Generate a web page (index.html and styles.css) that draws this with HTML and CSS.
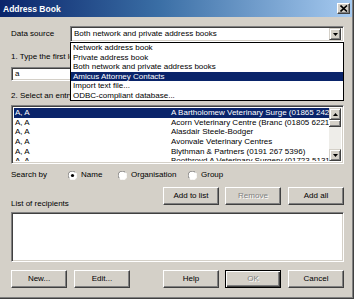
FILE: index.html
```html
<!DOCTYPE html>
<html>
<head>
<meta charset="utf-8">
<link rel="stylesheet" href="styles.css">
</head>
<body>
<div class="window">
  <div class="titlebar">
    <span class="title">Address Book</span>
    <span class="closebtn"><svg width="8" height="7" viewBox="0 0 8 7"><path d="M0.5 0.5 L7 6.5 M7 0.5 L0.5 6.5" stroke="#000" stroke-width="1.6"/></svg></span>
  </div>
  <div class="content">
    <div class="row-source">
      <span class="lbl-source">Data source</span>
      <div class="combo">
        <span class="combo-text">Both network and private address books</span>
        <span class="arrowbtn"><svg width="5" height="3" viewBox="0 0 5 3"><path d="M0 0 H5 L2.5 3 Z" fill="#000"/></svg></span>
        <ul class="dropdown">
          <li>Network address book</li>
          <li>Private address book</li>
          <li>Both network and private address books</li>
          <li class="sel">Amicus Attorney Contacts</li>
          <li>Import text file...</li>
          <li>ODBC-compliant database...</li>
        </ul>
      </div>
    </div>
    <div class="lbl lbl-type">1. Type the first letters of the name</div>
    <div class="input">a</div>
    <div class="lbl lbl-select">2. Select an entry from the list</div>
    <div class="listbox">
      <div class="rows">
        <div class="item sel"><span class="c1">A, A</span><span class="c2">A Bartholomew Veterinary Surge (01865 242222)</span></div>
        <div class="item"><span class="c1">A, A</span><span class="c2">Acorn Veterinary Centre (Branc (01805 622100)</span></div>
        <div class="item"><span class="c1">A, A</span><span class="c2">Alasdair Steele-Bodger</span></div>
        <div class="item"><span class="c1">A, A</span><span class="c2">Avonvale Veterinary Centres</span></div>
        <div class="item"><span class="c1">A, A</span><span class="c2">Blythman &amp; Partners (0191 267 5396)</span></div>
        <div class="item"><span class="c1">A, A</span><span class="c2">Boothroyd A Veterinary Surgery (01723 513111)</span></div>
      </div>
      <div class="scrollbar">
        <span class="sbtn"><svg width="5" height="3" viewBox="0 0 5 3"><path d="M2.5 0 L5 3 H0 Z" fill="#000"/></svg></span>
        <span class="thumb"></span>
        <span class="track"></span>
        <span class="sbtn"><svg width="5" height="3" viewBox="0 0 5 3"><path d="M0 0 H5 L2.5 3 Z" fill="#000"/></svg></span>
      </div>
    </div>
    <div class="row-search">
      <span class="lbl-search">Search by</span>
      <span class="radio r-name"><svg width="9" height="9" viewBox="0 0 9 9"><circle cx="4.5" cy="4.5" r="4" fill="#fff"/><path d="M1.3 7.2 A4 4 0 0 1 7.2 1.3" fill="none" stroke="#808080" stroke-width="1"/><path d="M7.7 1.8 A4 4 0 0 1 1.8 7.7" fill="none" stroke="#fff" stroke-width="1"/><circle cx="4.5" cy="4.5" r="1.6" fill="#000"/></svg>Name</span>
      <span class="radio r-org"><svg width="9" height="9" viewBox="0 0 9 9"><circle cx="4.5" cy="4.5" r="4" fill="#fff"/><path d="M1.3 7.2 A4 4 0 0 1 7.2 1.3" fill="none" stroke="#808080" stroke-width="1"/><path d="M7.7 1.8 A4 4 0 0 1 1.8 7.7" fill="none" stroke="#fff" stroke-width="1"/></svg>Organisation</span>
      <span class="radio r-group"><svg width="9" height="9" viewBox="0 0 9 9"><circle cx="4.5" cy="4.5" r="4" fill="#fff"/><path d="M1.3 7.2 A4 4 0 0 1 7.2 1.3" fill="none" stroke="#808080" stroke-width="1"/><path d="M7.7 1.8 A4 4 0 0 1 1.8 7.7" fill="none" stroke="#fff" stroke-width="1"/></svg>Group</span>
    </div>
    <div class="row-add">
      <span class="lbl-recip">List of recipients</span>
      <span class="btn b-first">Add to list</span>
      <span class="btn disabled">Remove</span>
      <span class="btn b-last">Add all</span>
    </div>
    <div class="recipients"></div>
    <div class="row-bottom">
      <span class="btn">New...</span>
      <span class="btn b-edit">Edit...</span>
      <span class="btn b-help">Help</span>
      <span class="btn disabled default">OK</span>
      <span class="btn b-last">Cancel</span>
    </div>
  </div>
</div>
</body>
</html>
```
FILE: styles.css
```css
* { box-sizing: border-box; }
html, body { margin: 0; padding: 0; }
body {
  width: 354px;
  height: 299px;
  background: #d4d0c8;
  font-family: "Liberation Sans", Arial, sans-serif;
  font-size: 8px;
  line-height: 10px;
  color: #000;
  overflow: hidden;
}
.window {
  width: 354px;
  height: 299px;
  border-right: 1px solid #404040;
  border-bottom: 1px solid #404040;
  box-shadow: inset -1px -1px 0 #808080;
}
.titlebar {
  height: 17px;
  margin-right: 1px;
  background: linear-gradient(to right, #0a246a 0%, #3a6ea5 45%, #a6caf0 100%);
  display: flex;
  align-items: center;
  padding-left: 3px;
  padding-right: 2px;
}
.title {
  color: #fff;
  font-weight: bold;
  font-size: 8.5px;
}
.closebtn {
  margin-left: auto;
  width: 13px;
  height: 11px;
  background: #d4d0c8;
  border-top: 1px solid #fff;
  border-left: 1px solid #fff;
  border-right: 1px solid #404040;
  border-bottom: 1px solid #404040;
  box-shadow: inset -1px -1px 0 #808080;
  display: flex;
  align-items: center;
  justify-content: center;
}
.content {
  padding: 9px 9px 0 11px;
  display: flex;
  flex-direction: column;
}
.row-source {
  display: flex;
  height: 16px;
}
.lbl-source {
  width: 59px;
  line-height: 16px;
}
.combo {
  position: relative;
  flex: 1;
  background: #fff;
  border-top: 1px solid #808080;
  border-left: 1px solid #808080;
  border-right: 1px solid #fff;
  border-bottom: 1px solid #fff;
  box-shadow: inset 1px 1px 0 #404040, inset -1px -1px 0 #d4d0c8;
  display: flex;
  align-items: center;
  padding: 0 2px 0 3px;
}
.combo-text { flex: 1; }
.arrowbtn, .sbtn {
  width: 12px;
  height: 12px;
  background: #d4d0c8;
  border-top: 1px solid #d4d0c8;
  border-left: 1px solid #d4d0c8;
  border-right: 1px solid #404040;
  border-bottom: 1px solid #404040;
  box-shadow: inset 1px 1px 0 #fff, inset -1px -1px 0 #808080;
  display: flex;
  align-items: center;
  justify-content: center;
}
.dropdown {
  position: absolute;
  top: 15px;
  left: -1px;
  right: -1px;
  height: 59px;
  margin: 0;
  padding: 0;
  list-style: none;
  background: #fff;
  border: 1px solid #000;
  z-index: 5;
}
.dropdown li {
  height: 9.5px;
  line-height: 9.5px;
  padding-left: 2px;
  white-space: nowrap;
}
.dropdown li.sel {
  background: #0a246a;
  color: #fff;
}
.lbl {
  white-space: nowrap;
  width: 59px;
  overflow: hidden;
}
.lbl-type { margin-top: 10px; }
.input {
  margin-top: 5px;
  height: 14px;
  background: #fff;
  border-top: 1px solid #808080;
  border-left: 1px solid #808080;
  border-right: 1px solid #fff;
  border-bottom: 1px solid #fff;
  box-shadow: inset 1px 1px 0 #404040, inset -1px -1px 0 #d4d0c8;
  padding-left: 3px;
  line-height: 12px;
}
.lbl-select { margin-top: 10px; }
.listbox {
  margin-top: 4px;
  height: 59px;
  background: #fff;
  border-top: 1px solid #808080;
  border-left: 1px solid #808080;
  border-right: 1px solid #fff;
  border-bottom: 1px solid #fff;
  box-shadow: inset 1px 1px 0 #404040, inset -1px -1px 0 #d4d0c8;
  display: flex;
  padding: 2px 2px 2px 2px;
  overflow: hidden;
}
.rows {
  flex: 1;
  overflow: hidden;
  padding-top: 0;
}
.item {
  display: flex;
  height: 9.7px;
  line-height: 9.7px;
  white-space: nowrap;
  overflow: hidden;
}
.item.sel {
  background: #0a246a;
  color: #fff;
}
.c1 {
  width: 157px;
  flex: none;
  padding-left: 1px;
}
.c2 { flex: none; }
.scrollbar {
  width: 12px;
  display: flex;
  flex-direction: column;
  background: #eeede9;
}
.thumb {
  height: 7px;
  background: #d4d0c8;
  border-right: 1px solid #404040;
  border-bottom: 1px solid #404040;
  box-shadow: inset 1px 1px 0 #fff, inset -1px -1px 0 #808080;
}
.track { flex: 1; }
.row-search {
  margin-top: 6px;
  display: flex;
  align-items: center;
  height: 10px;
}
.lbl-search { width: 57px; }
.radio {
  display: flex;
  align-items: center;
}
.radio svg { margin-right: 4px; }
.r-name { width: 50px; }
.r-org { width: 70px; }
.row-add {
  margin-top: 7px;
  display: flex;
  align-items: flex-end;
  height: 18px;
}
.lbl-recip {
  margin-right: auto;
  margin-bottom: -4px;
}
.btn {
  width: 56px;
  height: 18px;
  background: #d4d0c8;
  border-top: 1px solid #fff;
  border-left: 1px solid #fff;
  border-right: 1px solid #404040;
  border-bottom: 1px solid #404040;
  box-shadow: inset -1px -1px 0 #808080;
  display: flex;
  align-items: center;
  justify-content: center;
  flex: none;
}
.btn + .btn { margin-left: 6px; }
.btn.b-last { margin-left: 7px; }
.btn.disabled {
  color: #808080;
  text-shadow: 1px 1px 0 #fff;
}
.btn.default {
  border: 1px solid #000;
  box-shadow: inset 1px 1px 0 #fff, inset -1px -1px 0 #404040, inset -2px -2px 0 #808080;
}
.recipients {
  margin-top: 7px;
  height: 50px;
  background: #fff;
  border-top: 1px solid #808080;
  border-left: 1px solid #808080;
  border-right: 1px solid #fff;
  border-bottom: 1px solid #fff;
  box-shadow: inset 1px 1px 0 #404040, inset -1px -1px 0 #d4d0c8;
}
.row-bottom {
  margin-top: 8px;
  display: flex;
}
.btn.b-edit { margin-left: 7px; }
.btn.b-help { margin-left: auto; }
```
